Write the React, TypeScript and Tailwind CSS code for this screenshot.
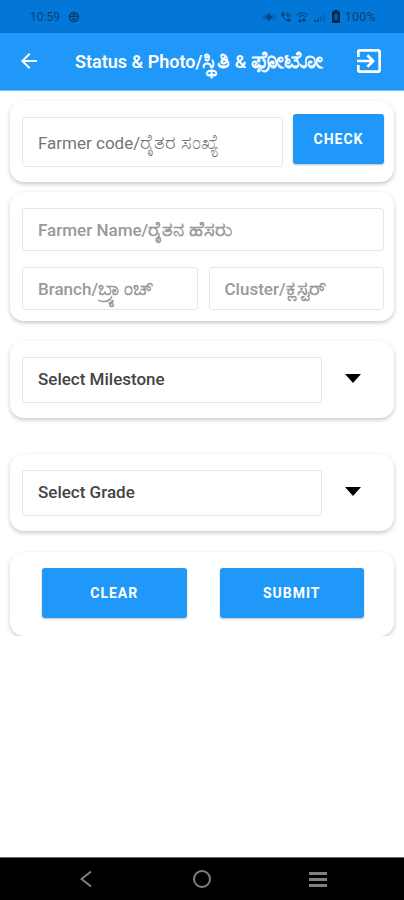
import type { ReactNode } from "react"
import { MdArrowBack, MdExitToApp, MdPhoneInTalk } from "react-icons/md"

const boxClass = "rounded-[3px] border border-[#e6e6e6] bg-white px-[15px] text-[17px] outline-none"

const buttonClass =
  "h-[50px] rounded-[3px] bg-[#2098fa] text-sm font-bold tracking-[1px] text-white shadow-[0_1px_2px_rgba(0,0,0,0.25)]"

function StatusBar() {
  return (
    <div className="flex h-[33px] items-center justify-between bg-[#0277d7] pr-7 pl-[30px] text-xs text-[#083f73]">
      <div className="flex items-center gap-2">
        <span>10:59</span>
        <svg width="12" height="12" viewBox="0 0 12 12" fill="none" stroke="currentColor" strokeWidth="1.5">
          <circle cx="6" cy="6" r="4.5" />
          <path d="M1 5.5h10M4 8h4M4 3.5h4" />
        </svg>
      </div>
      <div className="flex items-center gap-1">
        <svg width="14" height="12" viewBox="0 0 14 12" fill="none" stroke="currentColor">
          <path d="M1 4v4M3 3v6M11 3v6M13 4v4" opacity="0.6" />
          <path d="M4 6l3-4 3 4-3 4z" fill="currentColor" opacity="0.7" />
          <circle cx="7" cy="6" r="1.5" />
        </svg>
        <MdPhoneInTalk size={12} />
        <svg width="13" height="12" viewBox="0 0 13 12" fill="none" stroke="currentColor" strokeWidth="1.2">
          <path d="M1 4Q6.5-.5 12 4M3 6q3.5-3 7 0" />
          <path d="M4 8v3M2.5 9.5L4 11l1.5-1.5M8 11V8M6.5 9.5L8 8l1.5 1.5" />
        </svg>
        <svg width="14" height="12" viewBox="0 0 14 12" fill="none" stroke="currentColor" strokeWidth="1.5">
          <path d="M2 9v2M5 7.5V11" />
          <path d="M8 5v6M11 2v9" opacity="0.4" />
        </svg>
        <svg width="10" height="13" viewBox="0 0 10 13">
          <path fill="#04294d" d="M3 0h4v1.5h2V13H1V1.5h2z" />
          <path fill="#0277d7" d="M3.5 4h3v6h-3z" opacity="0.7" />
        </svg>
        <span className="tracking-[0.5px]">100%</span>
      </div>
    </div>
  )
}

function Header() {
  return (
    <header className="flex h-[58px] items-center border-b border-[#7ab8f8] bg-[#2098fa] pr-[19px] pb-px pl-[17px] text-white">
      <button type="button" aria-label="Back">
        <MdArrowBack size={24} />
      </button>
      <h1 className="ml-[34px] flex-1 text-lg leading-6 font-semibold whitespace-nowrap">
        Status &amp; Photo/<span className="text-2xl leading-6">ಸ್ಥಿತಿ</span> &amp;{" "}
        <span className="text-2xl leading-6">ಫೋಟೋ</span>
      </h1>
      <button type="button" aria-label="Log out">
        <MdExitToApp size={32} />
      </button>
    </header>
  )
}

function Card({ children }: { children: ReactNode }) {
  return (
    <section className="rounded-[14px] bg-white pr-2.5 pl-3 shadow-[0_2px_4px_rgba(0,0,0,0.22)]">
      {children}
    </section>
  )
}

type FieldProps = {
  id: string
  label: string
  local: string
  className: string
  localClassName?: string
}

// label and input share one grid cell, the label goes away once something is typed
function Field({ id, label, local, className, localClassName = "" }: FieldProps) {
  return (
    <div className={`grid min-w-0 items-center ${className}`}>
      <input
        id={id}
        placeholder=" "
        className={`${boxClass} peer col-start-1 row-start-1 h-full w-full min-w-0 text-[#444444]`}
      />
      <label
        htmlFor={id}
        className="pointer-events-none col-start-1 row-start-1 pl-4 text-[17px] leading-6 whitespace-nowrap peer-not-placeholder-shown:invisible"
      >
        {label}/<span className={`text-xl leading-6 ${localClassName}`}>{local}</span>
      </label>
    </div>
  )
}

function SelectCard({ label }: { label: string }) {
  return (
    <Card>
      <label className="flex items-center pt-4 pb-[15px]">
        <select
          aria-label={label}
          className={`${boxClass} h-[46px] min-w-0 flex-1 appearance-none font-medium text-[#444444]`}
        >
          <option>{label}</option>
        </select>
        <span className="flex w-[62px] shrink-0 justify-center pb-1">
          <svg width="16" height="9" viewBox="0 0 16 9">
            <path d="M0 0h16L8 9z" />
          </svg>
        </span>
      </label>
    </Card>
  )
}

function NavBar() {
  return (
    <nav className="grid h-[43px] grid-cols-3 items-center border-t border-[#666666] bg-black px-7 text-[#808080]">
      <button type="button" aria-label="Go back" className="flex justify-center">
        <svg width="12" height="18" viewBox="0 0 12 18" fill="none" stroke="currentColor" strokeWidth="2">
          <path d="M11 1.5L1.5 9l9.5 7.5" />
        </svg>
      </button>
      <button type="button" aria-label="Home" className="flex justify-center">
        <svg width="20" height="20" viewBox="0 0 20 20" fill="none" stroke="currentColor" strokeWidth="2">
          <circle cx="10" cy="10" r="8" />
        </svg>
      </button>
      <button type="button" aria-label="Recent apps" className="flex justify-center">
        <svg width="18" height="16" viewBox="0 0 18 16" fill="none" stroke="currentColor" strokeWidth="3">
          <path d="M0 2.5h18M0 8.5h18M0 14.5h18" />
        </svg>
      </button>
    </nav>
  )
}

export default function App() {
  return (
    <div className="flex min-h-screen flex-col bg-white font-['Roboto','Noto_Sans',sans-serif]">
      <StatusBar />
      <Header />

      <main className="flex-1">
        <form className="px-2.5 pt-2.5" onSubmit={(e) => e.preventDefault()}>
          <Card>
            <div className="flex gap-2.5 pt-[13px] pb-[15px]">
              <Field
                id="farmer-code"
                label="Farmer code"
                local="ರೈತರ ಸಂಖ್ಯೆ"
                className="mt-[3px] h-[50px] flex-1 text-[#757575]"
              />
              <button type="button" className={`${buttonClass} w-[91px] shrink-0`}>
                CHECK
              </button>
            </div>
          </Card>

          <div className="mt-2.5">
            <Card>
              <div className="grid grid-cols-2 gap-x-[11px] gap-y-4 pt-4 pb-[11px]">
                <Field
                  id="farmer-name"
                  label="Farmer Name"
                  local="ರೈತನ ಹೆಸರು"
                  className="col-span-2 h-[43px] font-medium text-[#999999]"
                  localClassName="font-semibold"
                />
                <Field
                  id="branch"
                  label="Branch"
                  local="ಬ್ರ್ಯಾಂಚ್"
                  className="h-[43px] font-medium text-[#999999]"
                  localClassName="font-semibold"
                />
                <Field
                  id="cluster"
                  label="Cluster"
                  local="ಕ್ಲಸ್ಟರ್"
                  className="h-[43px] font-medium text-[#999999]"
                  localClassName="font-semibold"
                />
              </div>
            </Card>
          </div>

          <div className="mt-5 flex flex-col gap-9">
            <SelectCard label="Select Milestone" />
            <SelectCard label="Select Grade" />
          </div>

          <div className="-mx-2.5 mt-5 overflow-hidden px-2.5 pt-px">
            <Card>
              <div className="grid grid-cols-2 gap-[33px] px-5 pt-4 pb-[18px]">
                <button type="reset" className={buttonClass}>
                  CLEAR
                </button>
                <button type="submit" className={buttonClass}>
                  SUBMIT
                </button>
              </div>
            </Card>
          </div>
        </form>
      </main>

      <NavBar />
    </div>
  )
}
